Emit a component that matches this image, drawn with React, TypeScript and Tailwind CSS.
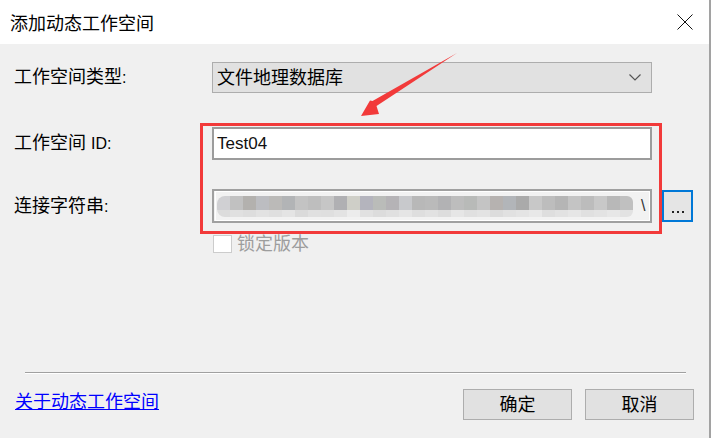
import React from "react";

const topBlocks = [
  "#d0d0d3", "#c1c1c1", "#b3b1ae", "#bcbdc1", "#bbbab8", "#b2b4b6", "#c3c3c3", "#bebebe",
  "#c6c6c6", "#b0b0b3", "#cfcfc8", "#b4b4bd", "#babcb9", "#b5b3b6", "#c8c9cc", "#b8b8b8",
  "#bababa", "#b2b2b4", "#bdbdbd", "#b8bab8", "#c4c4c4", "#b6b2b0", "#b2b5b9", "#aaaaaa",
  "#c8c8c8", "#bdbdbd", "#b5b5b5", "#c4c4c4", "#bcbcbc", "#c8c8c8", "#b8b8b8", "#c0c0c0",
];
const bottomBlocks = [
  "#dcdcdc", "#e0e0e0", "#dddddd", "#e2e2e2", "#dfdfdf", "#e4e4e4", "#dadada", "#e0e0e0",
  "#dfdfdf", "#e3e3e3", "#ececec", "#e1e1e1", "#dcdcdc", "#e0e0e0", "#e5e5e5", "#dedede",
  "#e2e2e2", "#dddddd", "#e6e6e6", "#e0e0e0", "#e3e3e3", "#dcdcdc", "#e1e1e1", "#e4e4e4",
  "#e8e8e8", "#dedede", "#e2e2e2", "#e6e6e6", "#e0e0e0", "#e3e3e3", "#e7e7e7", "#e2e2e2",
];

export default function App() {
  return (
    <div className="relative w-[711px] h-[438px] bg-[#f0f0f0] border-r-2 border-[#a2a2a2] flex flex-col font-['Liberation_Sans','Noto_Sans_CJK_SC',sans-serif] text-[18px] text-black overflow-hidden">
      {/* Title bar */}
      <div className="h-[44px] bg-white flex items-center pl-[10px] pr-[16px] shrink-0">
        <span className="text-[18px] leading-[22px] font-['Noto_Sans_CJK_SC',sans-serif]">添加动态工作空间</span>
        <div className="ml-auto w-[16px] h-[16px] flex items-center justify-center">
          <svg width="16" height="16" viewBox="0 0 16 16">
            <path d="M0.5 0.5 L15.5 15.5 M15.5 0.5 L0.5 15.5" stroke="#111" strokeWidth="1" fill="none" />
          </svg>
        </div>
      </div>

      {/* Row 1 */}
      <div className="mt-[18px] h-[31px] flex items-center pl-[14px]">
        <div className="w-[198px] leading-[20px]">工作空间类型<span className="text-[16px]">:</span></div>
        <div className="w-[440px] h-[31px] bg-[#e1e1e1] border border-[#adadad] flex items-center pl-[4px] pr-[10px]">
          <span className="leading-[20px]">文件地理数据库</span>
          <svg className="ml-auto" width="12" height="7" viewBox="0 0 12 7">
            <polyline points="0.5,0.5 6,6 11.5,0.5" stroke="#555" strokeWidth="1.2" fill="none" />
          </svg>
        </div>
      </div>

      {/* Row 2 */}
      <div className="mt-[34px] h-[33px] flex items-center pl-[14px]">
        <div className="w-[198px] leading-[20px]">工作空间 <span className="text-[16px]">ID:</span></div>
        <div className="w-[440px] h-[33px] bg-white border-2 border-[#9c9c9c] flex items-center pl-[3px]">
          <span className="leading-[20px] text-[17px] text-[#111]">Test04</span>
        </div>
      </div>

      {/* Row 3 */}
      <div className="mt-[29px] h-[34px] flex items-center pl-[14px]">
        <div className="w-[198px] leading-[20px]">连接字符串<span className="text-[16px]">:</span></div>
        <div className="w-[440px] h-[34px] bg-[#f2f2f2] border-2 border-[#a0a0a0] flex items-center pl-[1px]">
          <div className="h-[30px] w-full border border-white flex items-center pl-[1px]">
            <div className="flex flex-col blur-[0.4px] rounded-l-[8px] rounded-r-[6px] overflow-hidden">
              <div className="flex">
                {topBlocks.map((c, i) => (
                  <div key={i} className="w-[13px] h-[14px]" style={{ backgroundColor: c }} />
                ))}
              </div>
              <div className="flex">
                {bottomBlocks.map((c, i) => (
                  <div key={i} className="w-[13px] h-[7px]" style={{ backgroundColor: c }} />
                ))}
              </div>
            </div>
            <span className="ml-[8px] text-[16px] leading-[18px] text-[#333]">\</span>
          </div>
        </div>
        <div className="ml-[10px] w-[31px] h-[32px] border-2 border-[#0078d7] bg-[#e5e5e5] flex items-end justify-center gap-[3px] pb-[7px]">
          <div className="w-[2px] h-[2px] bg-[#222]" />
          <div className="w-[2px] h-[2px] bg-[#222]" />
          <div className="w-[2px] h-[2px] bg-[#222]" />
        </div>
      </div>

      {/* Checkbox */}
      <div className="mt-[12px] h-[18px] flex items-center pl-[213px]">
        <div className="w-[19px] h-[18px] bg-white border border-[#cccccc]" />
        <span className="ml-[5px] leading-[20px] text-[#9d9d9d]">锁定版本</span>
      </div>

      {/* Separator */}
      <div className="mt-[119px] ml-[25px] w-[661px] flex flex-col">
        <div className="h-px bg-[#a0a0a0]" />
        <div className="h-px bg-white" />
      </div>

      {/* Footer */}
      <div className="mt-[15px] h-[31px] flex items-center pl-[15px] pr-[15px]">
        <a className="text-[#0000ff] underline leading-[20px] -mt-[6px] cursor-pointer">关于动态工作空间</a>
        <div className="ml-auto flex gap-[13px]">
          <div className="w-[109px] h-[31px] bg-[#e1e1e1] border border-[#adadad] flex items-center justify-center leading-[20px]">确定</div>
          <div className="w-[109px] h-[31px] bg-[#e1e1e1] border border-[#adadad] flex items-center justify-center leading-[20px]">取消</div>
        </div>
      </div>

      {/* Annotation overlay: red box */}
      <div className="absolute left-[200px] top-[123px] w-[462px] h-[111px] border-[3px] border-[#f23a3a] pointer-events-none" />
      {/* Annotation arrow */}
      <svg className="absolute left-0 top-0 pointer-events-none" width="711" height="438" viewBox="0 0 711 438">
        <polygon
          points="361,116 379,114 376.5,106 457,53 372.5,101 370,100.5"
          fill="#f23a3a"
        />
      </svg>
    </div>
  );
}
